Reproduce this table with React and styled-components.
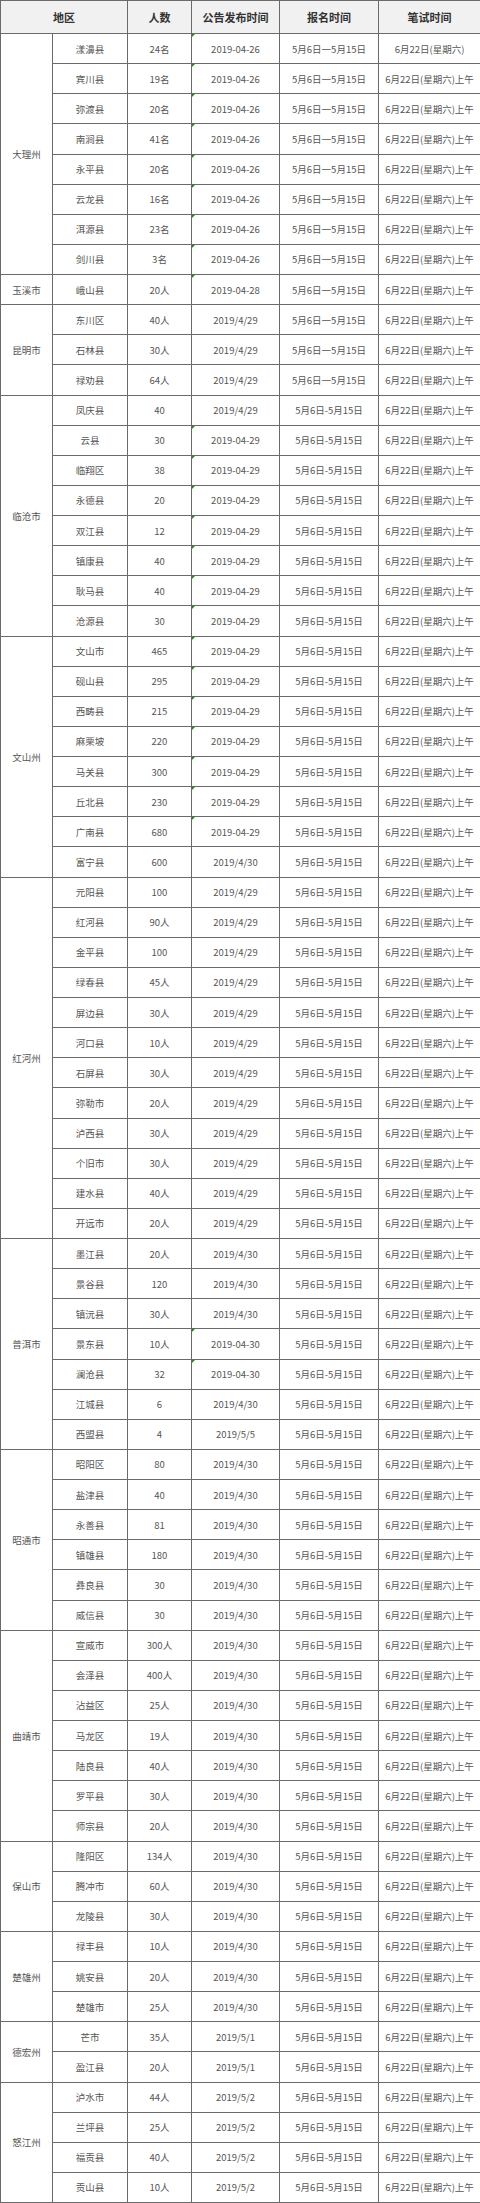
import React from 'react';
import styled, { createGlobalStyle } from 'styled-components';

const GlobalStyle = createGlobalStyle`
  html, body {
    margin: 0;
    padding: 0;
    background: #fff;
  }
  body {
    font-family: "Noto Sans CJK SC", "Noto Sans", sans-serif;
  }
`;

const LONG = '5月6日一5月15日';
const SHORT = '5月6日-5月15日';
const EXAM = '6月22日(星期六)上午';

// [区域, [[县, 人数, 公告时间], ...]]
const groups = [
  ['大理州', [
    ['漾濞县', '24名', '2019-04-26'],
    ['宾川县', '19名', '2019-04-26'],
    ['弥渡县', '20名', '2019-04-26'],
    ['南涧县', '41名', '2019-04-26'],
    ['永平县', '20名', '2019-04-26'],
    ['云龙县', '16名', '2019-04-26'],
    ['洱源县', '23名', '2019-04-26'],
    ['剑川县', '3名', '2019-04-26'],
  ]],
  ['玉溪市', [
    ['峨山县', '20人', '2019-04-28'],
  ]],
  ['昆明市', [
    ['东川区', '40人', '2019/4/29'],
    ['石林县', '30人', '2019/4/29'],
    ['禄劝县', '64人', '2019/4/29'],
  ]],
  ['临沧市', [
    ['凤庆县', '40', '2019/4/29'],
    ['云县', '30', '2019-04-29'],
    ['临翔区', '38', '2019-04-29'],
    ['永德县', '20', '2019-04-29'],
    ['双江县', '12', '2019-04-29'],
    ['镇康县', '40', '2019-04-29'],
    ['耿马县', '40', '2019-04-29'],
    ['沧源县', '30', '2019-04-29'],
  ]],
  ['文山州', [
    ['文山市', '465', '2019-04-29'],
    ['砚山县', '295', '2019-04-29'],
    ['西畴县', '215', '2019-04-29'],
    ['麻栗坡', '220', '2019-04-29'],
    ['马关县', '300', '2019-04-29'],
    ['丘北县', '230', '2019-04-29'],
    ['广南县', '680', '2019-04-29'],
    ['富宁县', '600', '2019/4/30'],
  ]],
  ['红河州', [
    ['元阳县', '100', '2019/4/29'],
    ['红河县', '90人', '2019/4/29'],
    ['金平县', '100', '2019/4/29'],
    ['绿春县', '45人', '2019/4/29'],
    ['屏边县', '30人', '2019/4/29'],
    ['河口县', '10人', '2019/4/29'],
    ['石屏县', '30人', '2019/4/29'],
    ['弥勒市', '20人', '2019/4/29'],
    ['泸西县', '30人', '2019/4/29'],
    ['个旧市', '30人', '2019/4/29'],
    ['建水县', '40人', '2019/4/29'],
    ['开远市', '20人', '2019/4/29'],
  ]],
  ['普洱市', [
    ['墨江县', '20人', '2019/4/30'],
    ['景谷县', '120', '2019/4/30'],
    ['镇沅县', '30人', '2019/4/30'],
    ['景东县', '10人', '2019-04-30'],
    ['澜沧县', '32', '2019-04-30'],
    ['江城县', '6', '2019/4/30'],
    ['西盟县', '4', '2019/5/5'],
  ]],
  ['昭通市', [
    ['昭阳区', '80', '2019/4/30'],
    ['盐津县', '40', '2019/4/30'],
    ['永善县', '81', '2019/4/30'],
    ['镇雄县', '180', '2019/4/30'],
    ['彝良县', '30', '2019/4/30'],
    ['威信县', '30', '2019/4/30'],
  ]],
  ['曲靖市', [
    ['宣威市', '300人', '2019/4/30'],
    ['会泽县', '400人', '2019/4/30'],
    ['沾益区', '25人', '2019/4/30'],
    ['马龙区', '19人', '2019/4/30'],
    ['陆良县', '40人', '2019/4/30'],
    ['罗平县', '30人', '2019/4/30'],
    ['师宗县', '20人', '2019/4/30'],
  ]],
  ['保山市', [
    ['隆阳区', '134人', '2019/4/30'],
    ['腾冲市', '60人', '2019/4/30'],
    ['龙陵县', '30人', '2019/4/30'],
  ]],
  ['楚雄州', [
    ['禄丰县', '10人', '2019/4/30'],
    ['姚安县', '20人', '2019/4/30'],
    ['楚雄市', '25人', '2019/4/30'],
  ]],
  ['德宏州', [
    ['芒市', '35人', '2019/5/1'],
    ['盈江县', '20人', '2019/5/1'],
  ]],
  ['怒江州', [
    ['泸水市', '44人', '2019/5/2'],
    ['兰坪县', '25人', '2019/5/2'],
    ['福贡县', '40人', '2019/5/2'],
    ['贡山县', '10人', '2019/5/2'],
  ]],
];

const Table = styled.table`
  width: 480px;
  table-layout: fixed;
  border-collapse: collapse;
  border: 1px solid #6a6a6a;
`;

const HeadRow = styled.tr`
  height: 33px;
  background: #f1f1f1;
`;

const Th = styled.th`
  padding: 0;
  border: 1px solid #6a6a6a;
  font-size: 11px;
  font-weight: bold;
  color: #333;
  text-align: center;
  vertical-align: middle;
`;

const Row = styled.tr`
  height: 30.13px;
`;

const Td = styled.td`
  position: relative;
  padding: 0;
  border: 1px solid #6a6a6a;
  font-size: 9.5px;
  color: #555;
  text-align: center;
  vertical-align: middle;
  white-space: nowrap;

  ${p => p.$flag && `
    &::before {
      content: '';
      position: absolute;
      left: 0;
      top: 0;
      border-top: 3px solid #1f8a1f;
      border-right: 3px solid transparent;
    }
  `}
`;

const RegionCell = styled(Td)`
  color: #555;
`;

export default function App() {
  let count = 0;
  return (
    <>
      <GlobalStyle />
      <Table>
        <colgroup>
          <col style={{ width: 52 }} />
          <col style={{ width: 75 }} />
          <col style={{ width: 64 }} />
          <col style={{ width: 88 }} />
          <col style={{ width: 99 }} />
          <col style={{ width: 102 }} />
        </colgroup>
        <thead>
          <HeadRow>
            <Th colSpan={2}>地区</Th>
            <Th>人数</Th>
            <Th>公告发布时间</Th>
            <Th>报名时间</Th>
            <Th>笔试时间</Th>
          </HeadRow>
        </thead>
        <tbody>
          {groups.map(([region, rows]) =>
            rows.map(([county, num, date], i) => {
              const idx = count++;
              return (
                <Row key={county}>
                  {i === 0 && <RegionCell rowSpan={rows.length}>{region}</RegionCell>}
                  <Td>{county}</Td>
                  <Td>{num}</Td>
                  <Td $flag={date.includes('-')}>{date}</Td>
                  <Td>{idx < 12 ? LONG : SHORT}</Td>
                  <Td>{idx === 0 ? '6月22日(星期六)' : EXAM}</Td>
                </Row>
              );
            })
          )}
        </tbody>
      </Table>
    </>
  );
}
